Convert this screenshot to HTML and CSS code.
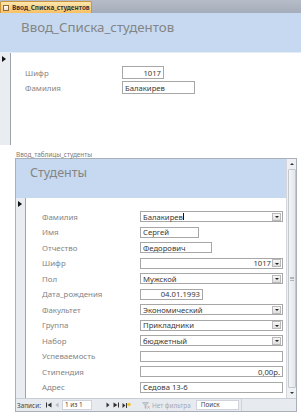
FILE: index.html
```html
<!DOCTYPE html>
<html lang="ru">
<head>
<meta charset="utf-8">
<title>Ввод_Списка_студентов</title>
<link rel="stylesheet" href="styles.css">
</head>
<body>
<div class="tabbar">
  <div class="tab"><span class="tab-icon"></span>Ввод_Списка_студентов</div>
</div>
<header class="form-header"><h1>Ввод_Списка_студентов</h1></header>
<div class="detail">
  <div class="selector"><span class="sel-arrow"></span></div>
  <div class="fields main-fields">
    <span class="lbl">Шифр</span><span class="box num w42">1017</span>
    <span class="lbl">Фамилия</span><span class="box w73">Балакирев</span>
  </div>
</div>
<div class="sub-label">Ввод_таблицы_студенты</div>
<div class="subform">
  <div class="sub-main">
    <div class="sub-body">
      <div class="sub-header"><h2>Студенты</h2></div>
      <div class="sub-detail">
        <div class="selector"><span class="sel-arrow"></span></div>
        <div class="fields sub-fields">
          <span class="lbl">Фамилия</span><span class="box full dd"><span class="val">Балакирев<span class="caret"></span></span><span class="dd-btn"></span></span>
          <span class="lbl">Имя</span><span class="box w59">Сергей</span>
          <span class="lbl">Отчество</span><span class="box w72">Федорович</span>
          <span class="lbl">Шифр</span><span class="box full dd"><span class="val num">1017</span><span class="dd-btn"></span></span>
          <span class="lbl">Пол</span><span class="box full dd"><span class="val">Мужской</span><span class="dd-btn"></span></span>
          <span class="lbl">Дата_рождения</span><span class="box num w63">04.01.1993</span>
          <span class="lbl">Факультет</span><span class="box full dd"><span class="val">Экономический</span><span class="dd-btn"></span></span>
          <span class="lbl">Группа</span><span class="box full dd"><span class="val">Прикладники</span><span class="dd-btn"></span></span>
          <span class="lbl">Набор</span><span class="box full dd"><span class="val">бюджетный</span><span class="dd-btn"></span></span>
          <span class="lbl">Успеваемость</span><span class="box full"></span>
          <span class="lbl">Стипендия</span><span class="box full num">0,00р.</span>
          <span class="lbl">Адрес</span><span class="box full">Седова 13-6</span>
        </div>
      </div>
    </div>
    <div class="vscroll">
      <span class="sb-btn up"></span>
      <span class="sb-thumb"><span class="grip"></span></span>
      <span class="sb-btn down"></span>
    </div>
  </div>
  <div class="navbar">
    <span class="nav-title">Записи:</span>
    <svg class="nav-ico first" width="6" height="6" viewBox="0 0 6 6"><rect x="0" y="0.5" width="1" height="5" fill="#333"/><path d="M5.5 0.5 L1.5 3 L5.5 5.5 Z" fill="#333"/></svg>
    <svg class="nav-ico prev" width="4" height="6" viewBox="0 0 4 6"><path d="M3.5 0.5 L0.5 3 L3.5 5.5 Z" fill="#b8bcc2"/></svg>
    <span class="nav-box">1 из 1</span>
    <svg class="nav-ico next" width="4" height="6" viewBox="0 0 4 6"><path d="M0.5 0.5 L3.5 3 L0.5 5.5 Z" fill="#333"/></svg>
    <svg class="nav-ico last" width="6" height="6" viewBox="0 0 6 6"><path d="M0.5 0.5 L4.5 3 L0.5 5.5 Z" fill="#333"/><rect x="5" y="0.5" width="1" height="5" fill="#333"/></svg>
    <svg class="nav-ico new" width="9" height="7" viewBox="0 0 9 7"><path d="M0.5 1 L3.5 3.5 L0.5 6 Z" fill="#333"/><rect x="4" y="1" width="1" height="5" fill="#333"/><circle cx="7" cy="2.5" r="1.8" fill="#f2c230"/></svg>
    <svg class="nav-ico filter" width="8" height="7" viewBox="0 0 8 7"><path d="M0.5 0.5 H6.5 L4 3.5 V6.5 L3 6 V3.5 Z" fill="#c8ccd2" stroke="#a8adb5" stroke-width="0.6"/><path d="M5.5 4 L7.5 6.5 M7.5 4 L5.5 6.5" stroke="#d9a0a0" stroke-width="0.8"/></svg>
    <span class="nav-filter">Нет фильтра</span>
    <span class="nav-search">Поиск</span>
    <span class="nav-rest"></span>
  </div>
</div>
</body>
</html>
```

FILE: styles.css
```css
* { box-sizing: border-box; margin: 0; padding: 0; }
html, body { width: 301px; height: 417px; overflow: hidden; background: #fff; }
body { font-family: "Noto Sans", "Open Sans", sans-serif; color: #3c3c3c; }

/* document tab strip */
.tabbar {
  height: 13px;
  background: linear-gradient(#b6bdc8, #a5adba);
  display: flex;
  align-items: flex-end;
}
.tab {
  width: 92px;
  height: 12px;
  background: linear-gradient(#fde6ae, #f7c061);
  border: 1px solid #c99540;
  border-bottom: none;
  border-radius: 2px 2px 0 0;
  display: flex;
  align-items: center;
  gap: 3px;
  padding-left: 2px;
  font-size: 6.4px;
  font-weight: bold;
  color: #3a3a3a;
  white-space: nowrap;
  overflow: hidden;
}
.tab-icon {
  flex: none;
  width: 6px;
  height: 6px;
  border: 1px solid #8d6b3a;
  background: linear-gradient(#ffffff, #e6e0d2);
}

/* form header */
.form-header {
  height: 40px;
  background: #c6d9f0;
  border-bottom: 1px solid #e4ecf7;
  padding: 7px 0 0 21px;
}
.form-header h1 {
  font-size: 13.3px;
  line-height: 14px;
  font-weight: normal;
  color: #858585;
  white-space: nowrap;
}

/* record selector strip */
.selector {
  flex: none;
  background: #e9ecf0;
  border-right: 1px solid #9ea4ac;
  position: relative;
}
.sel-arrow {
  position: absolute;
  left: 2px;
  top: 3px;
  width: 0;
  height: 0;
  border-top: 3px solid transparent;
  border-bottom: 3px solid transparent;
  border-left: 4px solid #111;
}

/* main form detail */
.detail {
  display: flex;
  height: 92px;
}
.detail > .selector { width: 11px; }
.fields {
  display: grid;
  align-items: center;
  align-content: start;
}
.main-fields {
  padding: 13px 0 0 14px;
  grid-template-columns: 97px auto;
  grid-auto-rows: 13px;
  row-gap: 2px;
}
.lbl {
  font-size: 7.9px;
  color: #858585;
  white-space: nowrap;
}
.box {
  display: flex;
  align-items: center;
  height: 100%;
  border: 1px solid #a7a7a7;
  background: #fff;
  font-size: 7.7px;
  color: #3a3a3a;
  padding: 0 2px;
  white-space: nowrap;
  justify-self: start;
}
.box.num { justify-content: flex-end; }
.w42 { width: 42px; }
.w73 { width: 73px; }
.w59 { width: 59px; }
.w72 { width: 72px; }
.w63 { width: 63px; }
.full { width: 143px; }

.box.dd { padding: 0 1px 0 2px; gap: 1px; }
.val { flex: 1; display: flex; align-items: center; }
.val.num { justify-content: flex-end; }
.caret { display: inline-block; width: 1px; height: 7px; background: #111; margin-left: 0.5px; }
.dd-btn {
  flex: none;
  width: 9px;
  height: 8px;
  border: 1px solid #b9b9b9;
  background: linear-gradient(#f7f7f7, #dedede);
  position: relative;
}
.dd-btn::after {
  content: "";
  position: absolute;
  left: 2px;
  top: 2.5px;
  border-left: 2px solid transparent;
  border-right: 2px solid transparent;
  border-top: 2px solid #222;
}

/* subform */
.sub-label {
  height: 13px;
  padding: 6px 0 0 16px;
  font-size: 6.4px;
  line-height: 7px;
  color: #7a7a7a;
  white-space: nowrap;
}
.subform {
  margin-left: 15px;
  width: 282px;
  border: 1px solid #a9b0b9;
}
.sub-main {
  display: flex;
  height: 239px;
}
.sub-body {
  flex: 1;
  display: flex;
  flex-direction: column;
}
.sub-header {
  height: 39px;
  background: #c6d9f0;
  padding: 7px 0 0 14px;
}
.sub-header h2 {
  font-size: 12.5px;
  line-height: 13px;
  font-weight: normal;
  color: #858585;
}
.sub-detail {
  flex: 1;
  display: flex;
}
.sub-detail > .selector { width: 10px; }
.sub-fields {
  padding: 13px 0 0 16px;
  grid-template-columns: 98px auto;
  grid-auto-rows: 11px;
  row-gap: 4.5px;
}

/* vertical scrollbar */
.vscroll {
  width: 10px;
  background: #eef0f3;
  border-left: 1px solid #d4d8dd;
  display: flex;
  flex-direction: column;
  align-items: center;
  padding: 1px 0;
  gap: 1px;
}
.sb-btn {
  flex: none;
  width: 8px;
  height: 8px;
  position: relative;
}
.sb-btn::after {
  content: "";
  position: absolute;
  left: 2px;
  border-left: 2px solid transparent;
  border-right: 2px solid transparent;
}
.sb-btn.up::after { top: 3px; border-bottom: 2px solid #333; }
.sb-btn.down::after { top: 3px; border-top: 2px solid #333; }
.sb-thumb {
  flex: 1;
  width: 8px;
  border: 1px solid #c3c8cf;
  border-radius: 1px;
  background: linear-gradient(90deg, #f4f5f7, #e3e6ea);
  display: flex;
  align-items: center;
  justify-content: center;
}
.grip {
  width: 4px;
  height: 4px;
  border-top: 1px solid #b0b5bc;
  border-bottom: 1px solid #b0b5bc;
  position: relative;
}
.grip::after {
  content: "";
  position: absolute;
  left: 0;
  right: 0;
  top: 0.5px;
  border-top: 1px solid #b0b5bc;
}

/* navigation bar */
.navbar {
  height: 13px;
  background: #e7ebf0;
  border-top: 1px solid #c9ced5;
  display: flex;
  align-items: center;
  padding-left: 1px;
  font-size: 6.4px;
  color: #444;
  white-space: nowrap;
}
.nav-title { margin-right: 5px; }
.nav-ico { flex: none; }
.nav-ico.prev { margin-left: 3px; }
.nav-box {
  margin-left: 3px;
  width: 30px;
  height: 10px;
  background: #fff;
  border: 1px solid #d0d4da;
  padding-left: 2px;
  line-height: 8px;
}
.nav-ico.next { margin-left: 14px; }
.nav-ico.last { margin-left: 3px; }
.nav-ico.new { margin-left: 3px; }
.nav-ico.filter { margin-left: 11px; }
.nav-filter { margin-left: 2px; color: #a5a9b0; }
.nav-search {
  margin-left: 5px;
  width: 43px;
  height: 10px;
  background: #fff;
  border: 1px solid #d0d4da;
  padding-left: 4px;
  line-height: 8px;
}
.nav-rest {
  flex: 1;
  height: 100%;
  border-left: 1px solid #d0d4da;
  margin-left: 2px;
}
```
